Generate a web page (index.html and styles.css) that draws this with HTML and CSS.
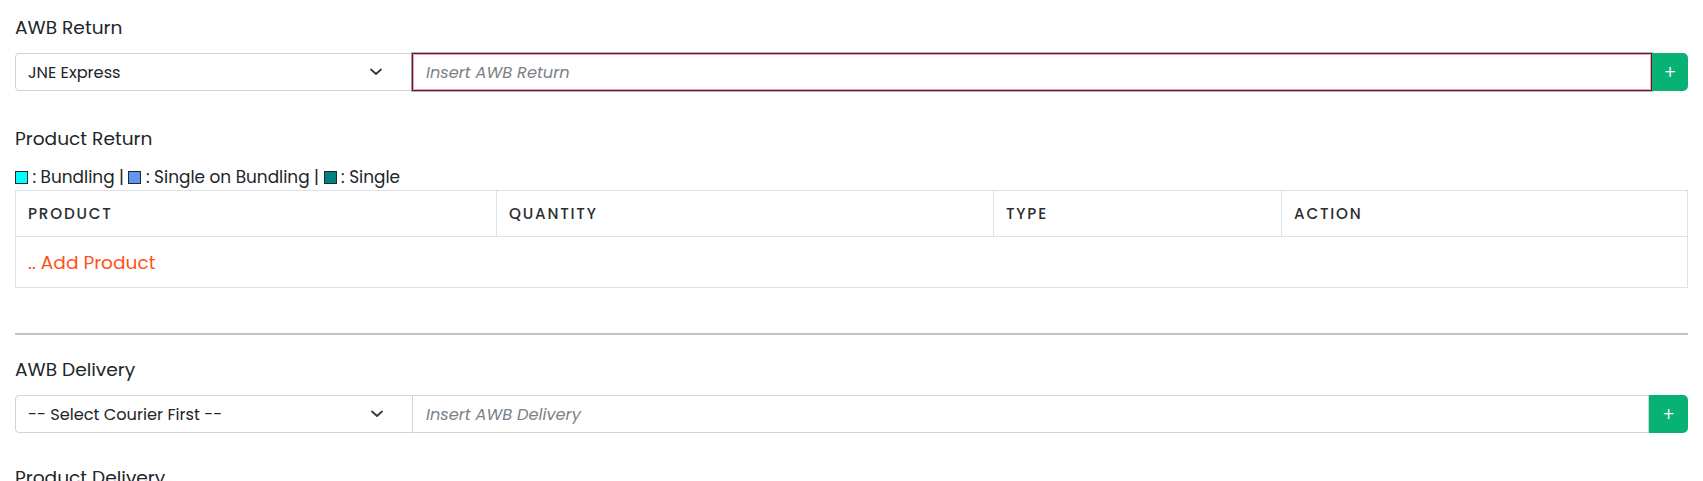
FILE: index.html
```html
<!DOCTYPE html>
<html lang="en">
<head>
<meta charset="utf-8">
<title>Return Form</title>
<link rel="stylesheet" href="styles.css">
</head>
<body>
<div class="container">
  <h5 class="title t1">AWB Return</h5>
  <div class="input-group">
    <div class="select">
      <span class="select-text">JNE Express</span>
      <svg class="chevron" width="12" height="8" viewBox="0 0 12 8"><path d="M1 1.5 L6 6 L11 1.5" fill="none" stroke="#343a40" stroke-width="1.8" stroke-linecap="round" stroke-linejoin="round"/></svg>
    </div>
    <div class="input focused"><span class="placeholder">Insert AWB Return</span></div>
    <button class="btn-add btn-top" type="button">+</button>
  </div>

  <h5 class="title t2">Product Return</h5>
  <div class="legend">
    <span class="sq sq-cyan"></span> : Bundling | <span class="sq sq-blue"></span> : Single on Bundling | <span class="sq sq-teal"></span> : Single
  </div>
  <table class="ptable">
    <colgroup>
      <col class="c1"><col class="c2"><col class="c3"><col class="c4">
    </colgroup>
    <thead>
      <tr><th>Product</th><th>Quantity</th><th>Type</th><th>Action</th></tr>
    </thead>
    <tbody>
      <tr><td colspan="4" class="add">.. Add Product</td></tr>
    </tbody>
  </table>

  <hr class="divider">

  <h5 class="title t3">AWB Delivery</h5>
  <div class="input-group">
    <div class="select select-2">
      <span class="select-text">-- Select Courier First --</span>
      <svg class="chevron" width="12" height="8" viewBox="0 0 12 8"><path d="M1 1.5 L6 6 L11 1.5" fill="none" stroke="#343a40" stroke-width="1.8" stroke-linecap="round" stroke-linejoin="round"/></svg>
    </div>
    <div class="input"><span class="placeholder">Insert AWB Delivery</span></div>
    <button class="btn-add btn-bottom" type="button">+</button>
  </div>

  <h5 class="title t4">Product Delivery</h5>
</div>
</body>
</html>
```

FILE: styles.css
```css
html, body {
  margin: 0;
  padding: 0;
  background: #ffffff;
}
body {
  font-family: Poppins, "Open Sans", "Liberation Sans", sans-serif;
  color: #212529;
  overflow: hidden;
}
.container {
  padding: 16px 15px 0 15px;
}
.title {
  margin: 0;
  font-size: 18.6px;
  font-weight: 400;
  line-height: 24px;
  color: #212529;
}
.t1 { margin-bottom: 13px; }
.t2 { margin-top: 36px; }
.t3 { margin-top: 23px; margin-bottom: 13px; }
.t4 { margin-top: 33px; }

.input-group {
  display: flex;
  height: 38px;
}
.select {
  width: 397px;
  box-sizing: border-box;
  border: 1px solid #ced4da;
  border-radius: 4px 0 0 4px;
  display: flex;
  align-items: center;
  padding: 0 29px 0 12px;
  font-size: 16.2px;
  color: #212529;
}
.select-2 { width: 398px; }
.select-text { flex: 1; }
.chevron { display: block; }
.input {
  flex: 1;
  box-sizing: border-box;
  border: 1px solid #ced4da;
  border-left: none;
  display: flex;
  align-items: center;
  padding: 0 13px;
  font-size: 16.2px;
}
.input.focused {
  border: 1px solid #5b1650;
  box-shadow: inset 0 0 0 1px #f3a896, 0 0 0 1px rgba(120, 80, 130, 0.45);
}
.placeholder {
  font-style: italic;
  color: #7b8188;
}
.btn-add {
  border: none;
  background: #07b274;
  color: #ffffff;
  font-family: "DejaVu Sans", sans-serif;
  font-size: 15px;
  padding: 0;
  border-radius: 0 5px 5px 0;
  cursor: pointer;
}
.btn-top { width: 36px; }
.btn-bottom { width: 39px; }

.legend {
  margin-top: 16px;
  font-size: 16.9px;
  line-height: 20px;
  color: #212529;
}
.sq {
  display: inline-block;
  width: 11px;
  height: 11px;
  border: 1px solid #1d2b2b;
  vertical-align: -1px;
}
.sq-cyan { background: #00ffff; }
.sq-blue { background: #6495ed; }
.sq-teal { background: #008080; }

.ptable {
  margin-top: 3px;
  width: 100%;
  border-collapse: collapse;
  table-layout: fixed;
  border: 1px solid #dee2e6;
}
.c1 { width: 481px; }
.c2 { width: 497px; }
.c3 { width: 288px; }
.c4 { width: auto; }
.ptable th {
  text-align: left;
  font-weight: 500;
  font-size: 15.2px;
  letter-spacing: 1.8px;
  text-transform: uppercase;
  color: #2b2e31;
  height: 46px;
  box-sizing: border-box;
  padding: 0 12px;
  border: 1px solid #dee2e6;
}
.ptable td {
  height: 51px;
  box-sizing: border-box;
  padding: 0 12px;
  border: 1px solid #dee2e6;
}
.add {
  color: #fd5219;
  font-size: 18.6px;
}

.divider {
  margin: 45px 0 0 0;
  border: none;
  height: 2px;
  background: #c4c4c4;
}
```
